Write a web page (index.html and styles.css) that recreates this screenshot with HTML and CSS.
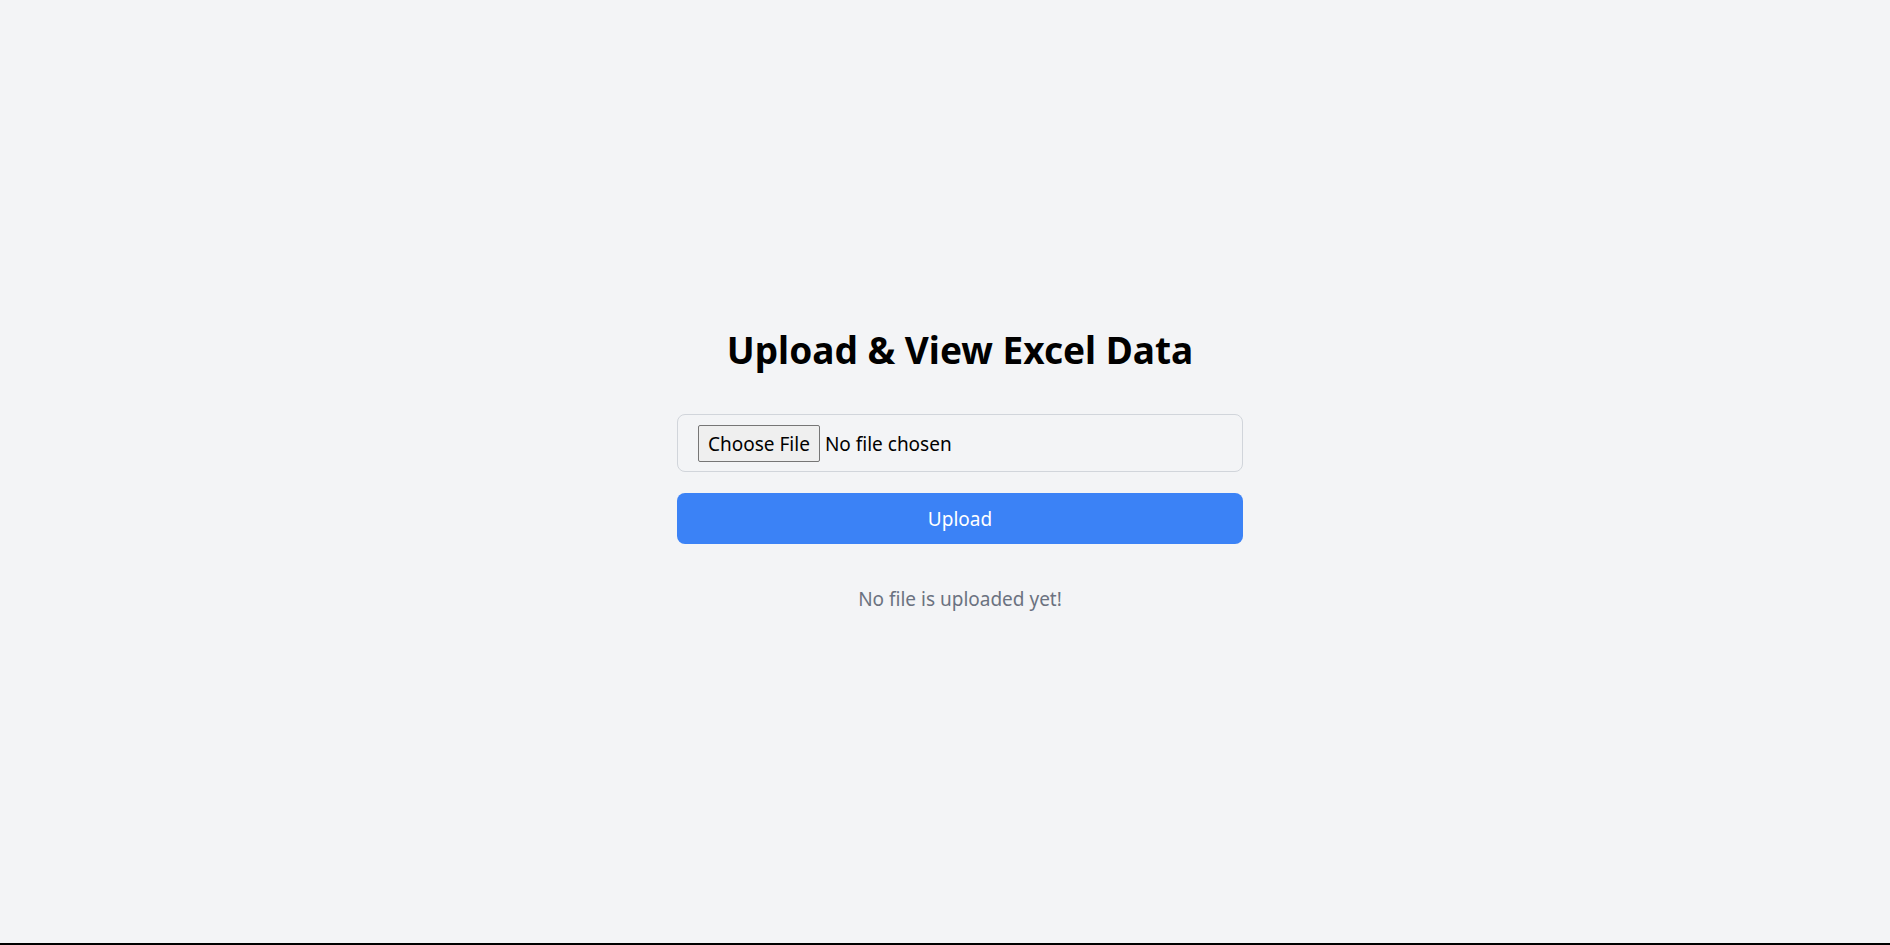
FILE: index.html
```html
<!DOCTYPE html>
<html lang="en">
<head>
<meta charset="utf-8">
<title>Upload &amp; View Excel Data</title>
<link rel="stylesheet" href="styles.css">
</head>
<body>
<main class="page">
  <div class="panel">
    <h1 class="title">Upload &amp; View Excel Data</h1>
    <div class="file-box">
      <input type="file" class="file-input" accept=".xlsx,.xls,.csv">
    </div>
    <button type="button" class="upload-btn">Upload</button>
    <p class="status">No file is uploaded yet!</p>
  </div>
</main>
</body>
</html>
```

FILE: styles.css
```css
html {
  background: #000;
}
body {
  margin: 0;
  background: #f3f4f6;
  font-family: "Noto Sans", "Open Sans", sans-serif;
  color: #000;
}
.page {
  height: calc(100vh - 2px);
  box-sizing: border-box;
  padding-left: 30px;
  display: flex;
  align-items: center;
  justify-content: center;
}
.panel {
  width: 566px;
  display: flex;
  flex-direction: column;
  align-items: stretch;
}
.title {
  margin: 0 0 44px;
  font-size: 37px;
  line-height: 40px;
  font-weight: 700;
  text-align: center;
}
.file-box {
  border: 1px solid #d1d5db;
  border-radius: 8px;
  padding: 10px 20px 9px;
}
.file-input {
  display: block;
  width: 100%;
  height: 37px;
  font-family: "Noto Sans", sans-serif;
  font-size: 19px;
  line-height: 37px;
  color: #000;
}
.file-input::file-selector-button {
  font-family: "Noto Sans", sans-serif;
  font-size: 19px;
  height: 37px;
  padding: 0 9px;
  margin-right: 5px;
  border: 1px solid #767676;
  border-radius: 2px;
  background: #efefef;
  color: #000;
}
.upload-btn {
  margin-top: 21px;
  height: 51px;
  border: none;
  border-radius: 8px;
  background: #3b82f6;
  color: #fff;
  font-family: "Noto Sans", sans-serif;
  font-size: 19px;
}
.status {
  margin: 41px 0 0;
  text-align: center;
  color: #6b7280;
  font-size: 19px;
  line-height: 28px;
}
```
